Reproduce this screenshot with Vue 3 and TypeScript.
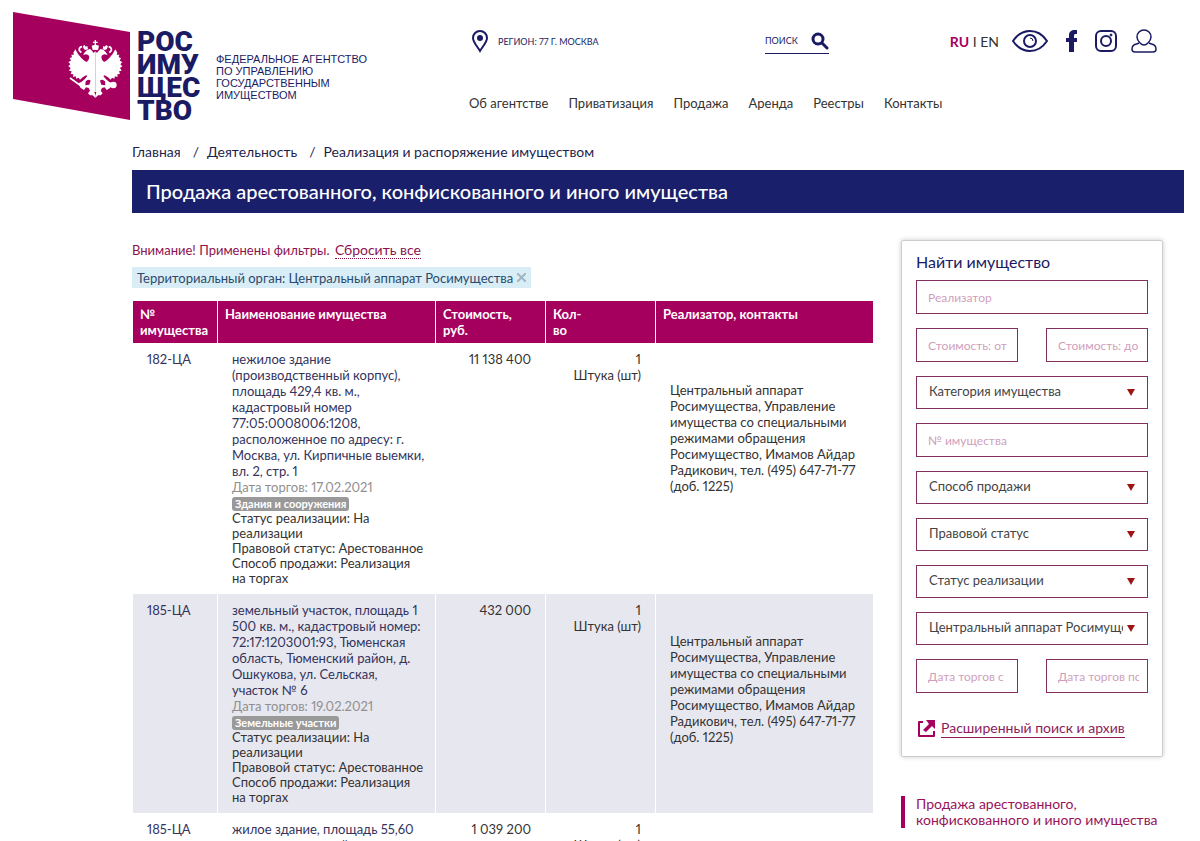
<script setup lang="ts">
interface Lot {
  id: string
  title: string
  date: string
  tag: string
  price: string
  contact: string
}

interface Field {
  kind: 'input' | 'select'
  label: string
  half?: boolean
}

const nav: string[] = ['Об агентстве', 'Приватизация', 'Продажа', 'Аренда', 'Реестры', 'Контакты']
const crumbs: string[] = ['Главная', 'Деятельность', 'Реализация и распоряжение имуществом']

const eagleHalf =
  'M100 52 95 57 90 50 84 45 76 47 69 54 63 63 72 61 79 63 82 69 80 77 74 84 67 80 58 72 48 60 40 46 34 56 36 62 28 62 30 70 23 72 27 80 19 84 25 91 19 97 26 102 21 110 29 112 26 120 34 121 33 129 41 127 43 134 50 131 54 137 62 130 72 124 76 126 68 136 58 144 48 148 56 162 66 168 72 160 80 162 84 170 78 178 84 184 92 184 100 192z'

const contact =
  'Центральный аппарат Росимущества, Управление имущества со специальными режимами обращения Росимущество, Имамов Айдар Радикович, тел. (495) 647-71-77 (доб. 1225)'

const lots: Lot[] = [
  {
    id: '182-ЦА',
    title:
      'нежилое здание (производственный корпус), площадь 429,4 кв. м., кадастровый номер 77:05:0008006:1208, расположенное по адресу: г. Москва, ул. Кирпичные выемки, вл. 2, стр. 1',
    date: '17.02.2021',
    tag: 'Здания и сооружения',
    price: '11 138 400',
    contact,
  },
  {
    id: '185-ЦА',
    title:
      'земельный участок, площадь 1 500 кв. м., кадастровый номер: 72:17:1203001:93, Тюменская область, Тюменский район, д. Ошкукова, ул. Сельская, участок № 6',
    date: '19.02.2021',
    tag: 'Земельные участки',
    price: '432 000',
    contact,
  },
  {
    id: '185-ЦА',
    title: 'жилое здание, площадь 55,60 кв. м., кадастровый номер: 72:17:1203001:192, Тюменская область',
    date: '19.02.2021',
    tag: 'Здания и сооружения',
    price: '1 039 200',
    contact,
  },
]

const fields: Field[] = [
  { kind: 'input', label: 'Реализатор' },
  { kind: 'input', label: 'Стоимость: от', half: true },
  { kind: 'input', label: 'Стоимость: до', half: true },
  { kind: 'select', label: 'Категория имущества' },
  { kind: 'input', label: '№ имущества' },
  { kind: 'select', label: 'Способ продажи' },
  { kind: 'select', label: 'Правовой статус' },
  { kind: 'select', label: 'Статус реализации' },
  { kind: 'select', label: 'Центральный аппарат Росимущества' },
  { kind: 'input', label: 'Дата торгов с', half: true },
  { kind: 'input', label: 'Дата торгов по', half: true },
]
</script>

<template>
  <div class="page">
    <header class="header">
      <a class="brand" href="#">
        <svg class="flag" viewBox="0 0 118 108" aria-hidden="true">
          <path d="M0 0 117 20v88L0 87z" fill="#a6005f" />
          <g transform="translate(49 22) scale(.3333)" fill="#fff">
            <path :d="eagleHalf" />
            <path :d="eagleHalf" transform="matrix(-1 0 0 1 200 0)" />
            <path d="M98 18h4v5h5v4h-5v5l9 3-3 13H92l-3-13 9-3v-5h-5v-4h5z" />
            <path d="M66 46l-4-9 6-4 3 5 5-2 2 9-6 3zM134 46l4-9-6-4-3 5-5-2-2 9 6 3z" />
            <path d="M60 38q-10 2-8 12l6 6M140 38q10 2 8 12l-6 6M24 132l36 26" fill="none" stroke="#fff" stroke-width="5" />
            <circle cx="154" cy="153" r="10" />
            <path d="M71 142q8-8 15-2l-4 12-12 2zM129 142q-8-8-15-2l4 12 12 2zM97 174h6l-3 10z" fill="#a6005f" />
          </g>
        </svg>
        <span class="wordmark"><span>РОС</span><span>ИМУ</span><span>ЩЕС</span><span>ТВО</span></span>
        <span class="agency">ФЕДЕРАЛЬНОЕ АГЕНТСТВО<br />ПО УПРАВЛЕНИЮ<br />ГОСУДАРСТВЕННЫМ<br />ИМУЩЕСТВОМ</span>
      </a>

      <div class="header-main">
        <div class="tools">
          <a class="region" href="#">
            <svg width="16" height="23" viewBox="0 0 16 23" aria-hidden="true">
              <path d="M8 1a7 7 0 0 0-7 7c0 4 4 8 7 13 3-5 7-9 7-13a7 7 0 0 0-7-7z" fill="none" stroke="#1a1b63" stroke-width="2" />
              <circle cx="8" cy="8" r="3" fill="#1a1b63" />
            </svg>
            <span>РЕГИОН: 77 Г. МОСКВА</span>
          </a>
          <form class="search" @submit.prevent>
            <input type="text" placeholder="ПОИСК" aria-label="Поиск" />
            <button type="submit" aria-label="Найти">
              <svg width="18" height="18" viewBox="0 0 18 18" fill="none" stroke="#1a1b63" aria-hidden="true">
                <circle cx="7" cy="7" r="5" stroke-width="3" />
                <path d="m11 11 5 5" stroke-width="3" stroke-linecap="round" />
              </svg>
            </button>
          </form>
          <div class="links">
            <span class="lang"><a class="current" href="#">RU</a> I <a href="#">EN</a></span>
            <a class="eye" href="#" aria-label="Версия для слабовидящих">
              <svg width="36" height="22" viewBox="0 0 36 22" fill="none" stroke="#1a1b63" stroke-width="2" aria-hidden="true">
                <path d="M1 11C5 5 11 1 18 1s13 4 17 10c-4 6-10 10-17 10S5 17 1 11z" stroke-linejoin="round" />
                <circle cx="18" cy="11" r="6" />
                <path d="M18 8a3 3 0 0 1 3 3" stroke-width="1" />
              </svg>
            </a>
            <a class="fb" href="#" aria-label="Facebook">
              <svg width="12" height="22" viewBox="0 0 12 22" aria-hidden="true">
                <path d="M11 0H9C5 0 3 2 3 5v3H0v4h3v10h5V12h3V8H8V6c0-2 1-2 2-2h1z" fill="#1a1b63" />
              </svg>
            </a>
            <a class="insta" href="#" aria-label="Instagram">
              <svg width="22" height="22" viewBox="0 0 22 22" fill="none" stroke="#1a1b63" stroke-width="2" aria-hidden="true">
                <rect x="1" y="1" width="20" height="20" rx="5" />
                <circle cx="11" cy="11" r="5" />
                <circle cx="16" cy="5" r="1" fill="#1a1b63" stroke-width="1" />
              </svg>
            </a>
            <a class="user" href="#" aria-label="Личный кабинет">
              <svg width="26" height="24" viewBox="0 0 26 24" fill="none" stroke="#1a1b63" stroke-width="1.5" stroke-linejoin="round" aria-hidden="true">
                <path d="M9 14C7 12 6 10 6 8c0-4 3-7 7-7s7 3 7 7c0 2-1 4-3 6-1 1-2 2-4 2s-3-1-4-2z" />
                <path d="M8 14c-2 1-4 1-5 2-2 1-2 2-2 4s1 3 3 3h18c2 0 3-1 3-3s0-3-2-4c-1-1-3-1-5-2" />
              </svg>
            </a>
          </div>
        </div>
        <nav class="nav">
          <a v-for="item in nav" :key="item" href="#">{{ item }}</a>
        </nav>
      </div>
    </header>

    <main class="body">
      <nav class="crumbs" aria-label="Навигационная цепочка">
        <template v-for="(crumb, i) in crumbs" :key="crumb">
          <span v-if="i" class="slash">/</span><a href="#">{{ crumb }}</a>
        </template>
      </nav>
      <h1>Продажа арестованного, конфискованного и иного имущества</h1>

      <div class="columns">
        <section class="results">
          <p class="notice">Внимание! Применены фильтры. <a href="#">Сбросить все</a></p>
          <div class="chip">
            <span>Территориальный орган: Центральный аппарат Росимущества</span>
            <button type="button" aria-label="Убрать фильтр">
              <svg width="9" height="9" viewBox="0 0 9 9" stroke="#a3b6c0" stroke-width="2" aria-hidden="true"><path d="m0 0 9 9M9 0 0 9" /></svg>
            </button>
          </div>
          <table>
            <colgroup>
              <col class="c-id" /><col class="c-name" /><col class="c-price" /><col class="c-qty" /><col class="c-contact" />
            </colgroup>
            <thead>
              <tr>
                <th>№<br />имущества</th>
                <th>Наименование имущества</th>
                <th>Стоимость,<br />руб.</th>
                <th>Кол-<br />во</th>
                <th>Реализатор, контакты</th>
              </tr>
            </thead>
            <tbody>
              <tr v-for="(lot, i) in lots" :key="i">
                <td><a href="#">{{ lot.id }}</a></td>
                <td>
                  <a class="lot" href="#">{{ lot.title }}</a>
                  <div class="date">Дата торгов: {{ lot.date }}</div>
                  <div class="tag-line"><span class="tag">{{ lot.tag }}</span></div>
                  <div class="meta">Статус реализации: На реализации</div>
                  <div class="meta">Правовой статус: Арестованное</div>
                  <div class="meta">Способ продажи: Реализация на торгах</div>
                </td>
                <td class="num">{{ lot.price }}</td>
                <td class="num">1<br />Штука (шт)</td>
                <td class="contact">{{ lot.contact }}</td>
              </tr>
            </tbody>
          </table>
        </section>

        <aside class="side">
          <form class="finder" @submit.prevent>
            <h2>Найти имущество</h2>
            <div class="fields">
              <template v-for="field in fields" :key="field.label">
                <input v-if="field.kind === 'input'" type="text" :class="{ half: field.half }" :placeholder="field.label" :aria-label="field.label" />
                <div v-else class="select">
                  <select :aria-label="field.label"><option>{{ field.label }}</option></select>
                  <svg width="8" height="7" viewBox="0 0 8 7" aria-hidden="true"><path d="M0 0h8L4 7z" fill="#9c1414" /></svg>
                </div>
              </template>
            </div>
            <a class="advanced" href="#">
              <svg width="17" height="17" viewBox="0 0 17 17" aria-hidden="true">
                <path d="M5 2H1v14h15v-5" fill="none" stroke="#a6005f" stroke-width="2" stroke-linejoin="round" />
                <path d="M8 0h9v9l-3-3-6 6-3-2 6-6z" fill="#a6005f" />
              </svg>
              <span>Расширенный поиск и архив</span>
            </a>
          </form>
          <a class="section-link" href="#">Продажа арестованного, конфискованного и иного имущества</a>
        </aside>
      </div>
    </main>
  </div>
</template>

<style>
html {
  scrollbar-width: none;
}
body {
  margin: 0;
  background: #fff;
}
</style>

<style scoped>
.page,
.page * {
  box-sizing: border-box;
}
.page {
  font-family: Lato, "Liberation Sans", sans-serif;
  font-size: 13px;
  font-variant-numeric: proportional-nums;
  color: #333;
}
a {
  color: inherit;
  text-decoration: none;
}
button,
input,
select {
  font-family: inherit;
  margin: 0;
}
svg {
  display: block;
  flex: none;
}

.header {
  display: grid;
  grid-template-columns: 456px 1fr;
  padding: 12px 43px 0 13px;
  height: 143px;
}
.brand {
  display: flex;
  align-items: flex-start;
  color: #1a1b63;
}
.flag {
  width: 118px;
  height: 108px;
}
.wordmark {
  display: flex;
  flex-direction: column;
  width: 79px;
  padding: 18px 0 0 6px;
  font-family: Roboto, "Liberation Sans", sans-serif;
  font-size: 28px;
  line-height: 23px;
  font-weight: 900;
}
.agency {
  padding-top: 41px;
  margin-left: 6px;
  font-family: "Liberation Sans", Arial, sans-serif;
  font-size: 11px;
  line-height: 12px;
}
.header-main {
  display: flex;
  flex-direction: column;
}
.tools {
  display: flex;
  align-items: center;
  height: 44px;
  padding-top: 14px;
}
.region {
  display: flex;
  align-items: center;
  gap: 10px;
  width: 296px;
  padding-left: 3px;
  font-size: 9px;
  color: #1a1b63;
}
.search {
  display: flex;
  align-items: center;
  width: 64px;
  height: 26px;
  border-bottom: 1px solid #1a1b63;
}
.search input {
  width: 46px;
  padding: 0;
  border: 0;
  background: none;
  font-size: 9px;
}
.search input::placeholder {
  color: #1a1b63;
  opacity: 1;
}
.search button {
  padding: 0;
  border: 0;
  background: none;
}
.links {
  display: flex;
  align-items: center;
  margin-left: auto;
}
.lang {
  margin-right: 13px;
  font-size: 14px;
}
.current {
  font-weight: 700;
  color: #a6005f;
}
.eye {
  margin-right: 18px;
}
.fb {
  margin-right: 17px;
}
.insta {
  margin-right: 14px;
}
.nav {
  display: flex;
  gap: 20px;
  margin-top: 38px;
  font-size: 13px;
  line-height: 18px;
}

.body {
  padding: 0 16px 0 132px;
}
.crumbs {
  display: flex;
  font-size: 14px;
  line-height: 18px;
  color: #1f1f4d;
  margin-bottom: 9px;
}
.slash {
  margin: 0 8px 0 12px;
}
h1 {
  margin: 0;
  padding: 0 14px;
  background: #1a1f6b;
  color: #fff;
  font-size: 20px;
  line-height: 43px;
  font-weight: 500;
}
.columns {
  display: grid;
  grid-template-columns: minmax(0, 741px) 262px;
  justify-content: space-between;
  padding: 27px 21px 0 0;
}
.notice {
  margin: 0 0 7px;
  font-size: 13px;
  line-height: 20px;
  color: #8c1250;
}
.notice a {
  margin-left: 2px;
  font-size: 14px;
  border-bottom: 1px dotted #8c1250;
}
.chip {
  display: flex;
  width: fit-content;
  align-items: center;
  gap: 4px;
  height: 21px;
  padding: 0 5px;
  background: #d9edf7;
  font-size: 13px;
  color: #2b4a6b;
}
.chip button {
  padding: 0;
  border: 0;
  background: none;
}

table {
  width: 100%;
  margin-top: 13px;
  border-collapse: collapse;
  table-layout: fixed;
}
.c-id {
  width: 85px;
}
.c-name {
  width: 218px;
}
.c-price,
.c-qty {
  width: 110px;
}
th {
  padding: 5px 7px;
  background: #a6005f;
  color: #fff;
  font-size: 13px;
  line-height: 16px;
  font-weight: 700;
  text-align: left;
  vertical-align: top;
  border-left: 1px solid #fff;
}
td {
  padding: 8px 10px 8px 14px;
  font-size: 13px;
  line-height: 16px;
  text-align: left;
  vertical-align: top;
  border-left: 1px solid #fff;
}
tbody tr:nth-child(even) td {
  background: #e7e7ef;
}
td a {
  color: #33335c;
}
.lot {
  display: block;
}
.date {
  color: #909090;
}
.tag-line {
  display: flex;
  height: 16px;
  padding-top: 2px;
}
.tag {
  padding: 0 3px;
  border-radius: 3px;
  background: #999;
  color: #fff;
  font-size: 11px;
  line-height: 13px;
  font-weight: 700;
}
.meta {
  line-height: 15px;
}
td.num {
  padding-right: 14px;
  text-align: right;
}
td.contact {
  padding-top: 39px;
}

.finder {
  padding: 11px 14px 18px;
  border: 1px solid #ccc;
  border-radius: 2px;
  box-shadow: 0 0 5px #ccc;
}
h2 {
  margin: 0 0 9px;
  font-size: 16px;
  line-height: 19px;
  font-weight: 400;
  color: #1a1b63;
}
.fields {
  display: flex;
  flex-wrap: wrap;
  justify-content: space-between;
  gap: 14px 0;
}
.fields input,
.select {
  width: 100%;
  height: 34px;
  border: 1px solid #84305f;
  background: #fff;
}
.fields input {
  padding: 0 8px 0 11px;
  font-size: 12px;
}
.fields input.half {
  width: 44%;
}
.fields input::placeholder {
  color: #cf9fbc;
  opacity: 1;
}
.fields .select {
  display: flex;
  align-items: center;
  height: 33px;
  padding: 0 12px;
}
.select select {
  flex: 1;
  min-width: 0;
  height: 31px;
  padding: 0 0 3px;
  border: 0;
  appearance: none;
  background: none;
  font-size: 13px;
  color: #444;
  margin-right: 4px;
}
.advanced {
  display: flex;
  align-items: center;
  gap: 6px;
  margin-top: 25px;
  padding-left: 2px;
  font-size: 14px;
  line-height: 19px;
  color: #8c1c5c;
}
.advanced span {
  border-bottom: 1px solid #8c1c5c;
}
.section-link {
  display: block;
  margin-top: 39px;
  padding-left: 11px;
  border-left: 4px solid #a6005f;
  font-size: 14px;
  line-height: 16px;
  color: #981358;
}
</style>
